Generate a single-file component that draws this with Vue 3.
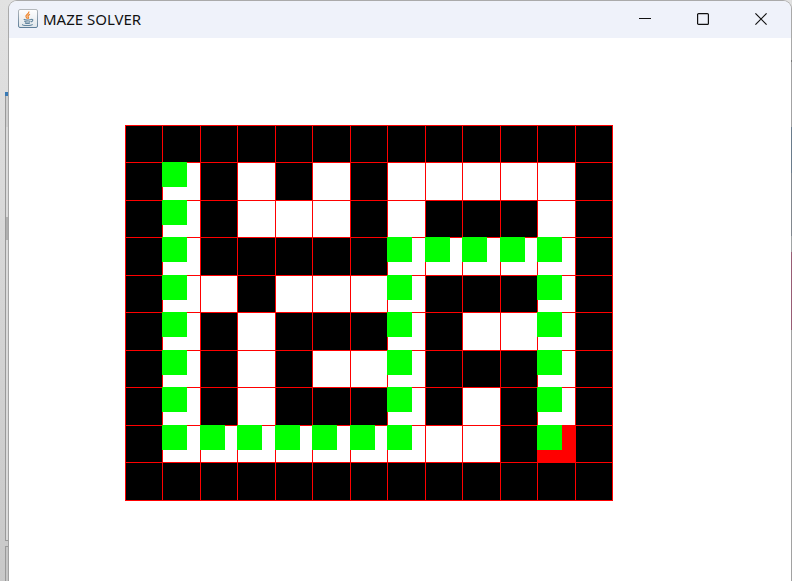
<script setup>
const WALL = '#'
const GOAL = 'G'

const maze = [
  '#############',
  '# # # #     #',
  '# #   # ### #',
  '# #####     #',
  '#  #    ### #',
  '# # ### #   #',
  '# # #   ### #',
  '# # ### # # #',
  '#         #G#',
  '#############',
]

// Solution as [row, column] steps
const path = [
  [1, 1], [2, 1], [3, 1], [4, 1], [5, 1], [6, 1], [7, 1], [8, 1],
  [8, 2], [8, 3], [8, 4], [8, 5], [8, 6], [8, 7],
  [7, 7], [6, 7], [5, 7], [4, 7], [3, 7],
  [3, 8], [3, 9], [3, 10], [3, 11],
  [4, 11], [5, 11], [6, 11], [7, 11], [8, 11],
]

const visited = new Set(path.map(([r, c]) => `${r}-${c}`))

const cells = maze.flatMap((row, r) =>
  [...row].map((type, c) => ({
    id: `${r}-${c}`,
    wall: type === WALL,
    goal: type === GOAL,
    step: visited.has(`${r}-${c}`),
  })),
)
</script>

<template>
  <div class="desktop">
    <div class="behind" aria-hidden="true">
      <div class="accent"></div>
      <div class="pane pane-head"></div>
      <div class="pane pane-main"><div class="thumb"></div></div>
      <div class="pane pane-foot"></div>
    </div>
    <main class="window">
      <header class="titlebar">
        <svg class="app-icon" viewBox="0 0 20 20" aria-hidden="true">
          <defs>
            <linearGradient id="tile" x1="0" y1="0" x2="0" y2="1">
              <stop offset="0" stop-color="#ffffff" />
              <stop offset="1" stop-color="#dfe5ea" />
            </linearGradient>
            <linearGradient id="edge" x1="0" y1="0" x2="0" y2="1">
              <stop offset="0" stop-color="#b4b8bc" />
              <stop offset="1" stop-color="#5f7f9a" />
            </linearGradient>
          </defs>
          <rect x="0.5" y="0.5" width="19" height="18" rx="1.5" fill="url(#tile)" stroke="url(#edge)" />
          <path d="M10.8 2.5C11.5 4.8 7.4 5.6 8 7.6C8.2 8.5 9.2 9 9.6 9.7M12 5.4C9.8 6.4 9.5 7.4 10.4 8.2C10.8 8.8 10.5 9.3 10 9.8" fill="none" stroke="#ee8a35" stroke-width="1.3" />
          <path d="M5.7 10.2C7.5 11.2 11 11.1 13 10.4M6.3 12.2C8 13.1 10.8 13 12.4 12.4M7 14C8.5 14.7 10.6 14.6 12 14M13 10.5C15.5 9.7 15.5 12 12.9 13M4.6 15.3C3.6 16.8 13.2 17 14.6 15.3" fill="none" stroke="#64869f" stroke-width="1.1" />
        </svg>
        <h1 class="title">MAZE SOLVER</h1>
        <div class="controls">
          <button type="button" aria-label="Minimize">
            <svg viewBox="0 0 12 12"><path d="M0 5.5H12" /></svg>
          </button>
          <button type="button" aria-label="Maximize">
            <svg viewBox="0 0 12 12"><rect x="0.6" y="0.6" width="10.8" height="10.8" rx="1" /></svg>
          </button>
          <button type="button" aria-label="Close">
            <svg viewBox="0 0 12 12"><path d="M0.4 0.4L11.6 11.6M11.6 0.4L0.4 11.6" /></svg>
          </button>
        </div>
      </header>
      <section class="canvas">
        <div class="maze" role="img" aria-label="Solved maze">
          <div
            v-for="cell in cells"
            :key="cell.id"
            class="cell"
            :class="{ wall: cell.wall, goal: cell.goal, step: cell.step }"
          ></div>
        </div>
      </section>
    </main>
  </div>
</template>

<style>
body {
  margin: 0;
}
</style>

<style scoped>
.desktop {
  display: flex;
  min-height: 100vh;
  background:
    linear-gradient(
      #dedede 60px, #555555 60px, #555555 62px, #cfcfd2 62px, #cfcfd2 127px,
      #2c5f8e 127px, #2c5f8e 173px, #6f8295 173px, #6f8295 236px,
      #c8d0d4 236px, #c8d0d4 252px, #b0084a 252px, #b0084a 330px, #cccccc 330px
    ) right / 1px 100% no-repeat,
    linear-gradient(#e2e2e2, #c8c8c8);
}

.behind {
  box-sizing: border-box;
  display: flex;
  flex-direction: column;
  flex: none;
  width: 8px;
  padding: 92px 0 0 5px;
}

.accent {
  height: 4px;
  background: #3a7ab5;
}

.pane {
  box-sizing: border-box;
  border-left: 1px solid #999999;
}

.pane-head {
  height: 31px;
  background: #cfcfcf;
}

.pane-main {
  height: 414px;
  padding-top: 90px;
  border-bottom: 1px solid #999999;
  background: #dadada;
}

.thumb {
  height: 23px;
  background: #b0b0b0;
}

.pane-foot {
  flex: 1;
  margin-top: 5px;
  border-top: 1px solid #999999;
  background: #c6c6c6;
}

.window {
  flex: 1;
  min-width: 0;
  overflow: hidden;
  border: 1px solid rgba(140, 140, 140, 0.65);
  border-bottom: 0;
  border-radius: 9px 9px 0 0;
  background: #ffffff;
  background-clip: padding-box;
}

.titlebar {
  box-sizing: border-box;
  display: flex;
  align-items: center;
  height: 37px;
  padding: 0 1px 1px 9px;
  background: #eff2fa;
}

.app-icon {
  width: 20px;
  height: 20px;
}

.title {
  margin: 0 0 0 5px;
  font: 400 15px/20px "Noto Sans", "Open Sans", sans-serif;
  color: #111111;
}

.controls {
  display: flex;
  margin-left: auto;
}

.controls button {
  display: grid;
  place-items: center;
  width: 58px;
  height: 36px;
  padding: 0;
  border: 0;
  background: none;
}

.controls svg {
  width: 12px;
  height: 12px;
  fill: none;
  stroke: #111111;
  stroke-width: 1.2;
}

.canvas {
  padding: 87px 116px;
}

.maze {
  display: grid;
  grid-template-columns: repeat(6, 37px 38px) 37px;
  grid-template-rows: repeat(5, 37px 38px);
  width: max-content;
  border: solid #ff0000;
  border-width: 0 1px 1px 0;
}

.cell {
  border: solid #ff0000;
  border-width: 1px 0 0 1px;
}

.wall {
  background: #000000;
}

.goal {
  background: #ff0000;
}

.step::before {
  content: "";
  display: block;
  width: 25px;
  height: 25px;
  margin: -1px 0 0 -1px;
  background: #00ff00;
}
</style>
